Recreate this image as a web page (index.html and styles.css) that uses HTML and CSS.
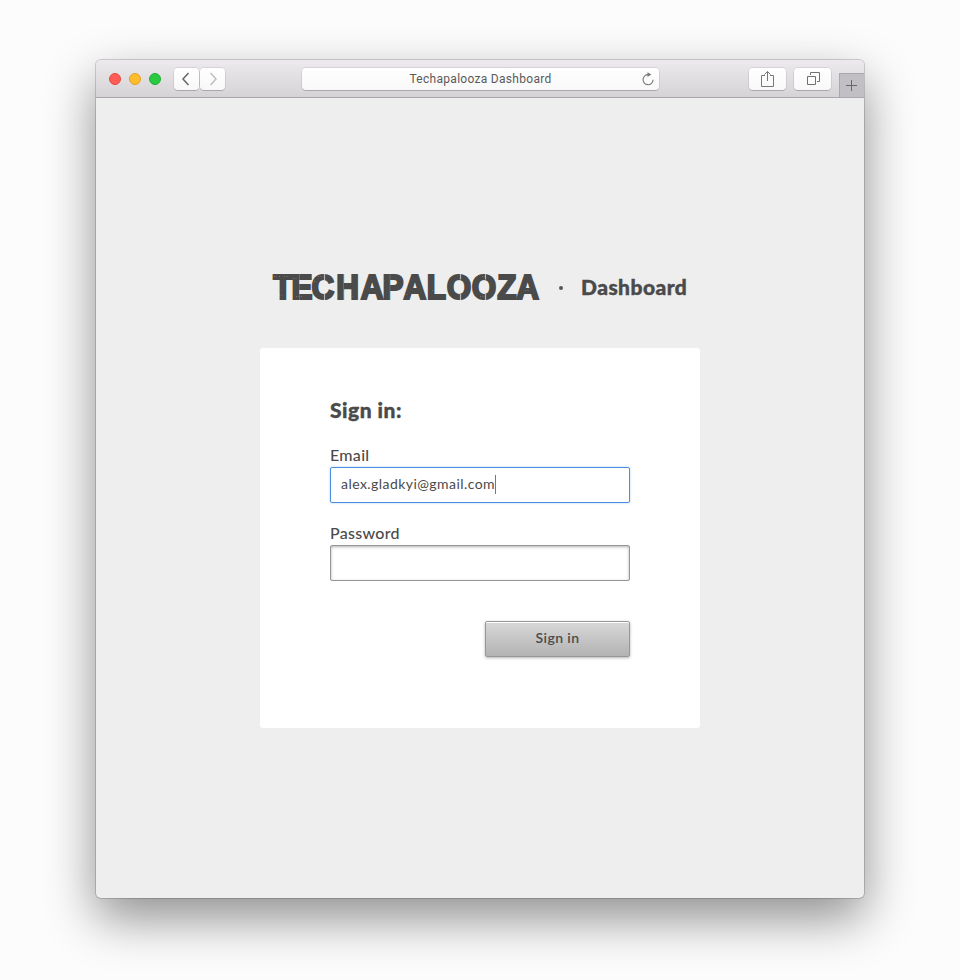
FILE: index.html
```html
<!DOCTYPE html>
<html lang="en">
<head>
<meta charset="utf-8">
<title>Techapalooza Dashboard</title>
<link rel="stylesheet" href="styles.css">
</head>
<body>
<div class="window">
  <header class="toolbar">
    <div class="lights"><i class="light red"></i><i class="light yellow"></i><i class="light green"></i></div>
    <div class="nav">
      <span class="control"><svg width="25" height="22" viewBox="0 0 25 22"><path d="M14.500 5 9 11l5.500 6" fill="none" stroke="#666" stroke-width="1.500"/></svg></span>
      <span class="control"><svg width="25" height="22" viewBox="0 0 25 22"><path d="M10.500 5 16 11l-5.500 6" fill="none" stroke="#bcbcbc" stroke-width="1.400"/></svg></span>
    </div>
    <div class="control address"><span class="address-text">Techapalooza Dashboard</span>
      <svg class="reload" width="14" height="16" viewBox="0 0 14 16"><path d="M7.500 3.700A5 5 0 1 0 12 8.700" fill="none" stroke="#777" stroke-width="1.100"/><path d="M6.500 1.200 10.300 3.500 6.500 6z" fill="#777"/></svg>
    </div>
    <div class="tools">
      <span class="control"><svg width="38" height="22" viewBox="0 0 38 22"><path d="M16 7.500h-3.500v11h12v-11H21M18.500 13V3.500M15.500 6.500l3-3 3 3" fill="none" stroke="#777"/></svg></span>
      <span class="control"><svg width="38" height="22" viewBox="0 0 38 22"><path d="M13.500 8.500h8v8h-8zM16.500 7v-2.500h9v9H23" fill="none" stroke="#707070"/></svg></span>
    </div>
    <div class="new-tab"><svg width="24" height="23" viewBox="0 0 24 23"><path d="M11.500 6v11M6 11.500h11" stroke="#68666a" fill="none"/></svg></div>
  </header>
  <main>
    <div class="brand">
      <svg class="logo" width="269" height="32" viewBox="0 0 269 32">
        <text class="logo-text" transform="scale(.9 1)" y="27" x="1.300 21.800 43.900 71.300 98.500 122.800 146.200 172 194.200 222 250.200 271.500">TECHAPALOOZA</text>
        <g fill="none" stroke="#eee">
          <path d="M52.500 1v7M52.500 22v7M188.500 1v6.500M188.500 22v7M213.500 1v6.500M213.500 22v7" stroke-width="1.200" opacity=".65"/>
          <path d="M27.500 2v26M71.500 2v26M118 2v26" opacity=".2"/>
          <path d="M2 4.500h3m2 0h2m3 0h5m4 2h4m17 3h3m27-3h4m14 9h3m17-7h3m19 14h4m24-4h4m19 0h3m24-14h4m24 11h3m12 3h4M7 23.500h3m14 1h7m15-20h4m28 20h3m54-19h3m70 19h4" stroke-dasharray="1 1.500" opacity=".25"/>
        </g>
      </svg>
      <i class="dot"></i>
      <span class="brand-name">Dashboard</span>
    </div>
    <form class="card">
      <h1>Sign in:</h1>
      <label>Email</label>
      <div class="field focused"><span class="value">alex.gladkyi@gmail.com</span><i class="caret"></i></div>
      <label>Password</label>
      <div class="field"></div>
      <button type="button">Sign in</button>
    </form>
  </main>
</div>
</body>
</html>
```
FILE: styles.css
```css
* { box-sizing: border-box; }
body { margin: 0; height: 980px; padding: 60px 96px 0; background: #fcfcfc; overflow: hidden; font-family: Lato, sans-serif; color: #4a4a4a; }
svg { display: block; }
.window { width: 768px; height: 838px; border-radius: 5px; background: #eee; box-shadow: 0 0 0 1px rgba(0,0,0,.16), 0 20px 50px rgba(0,0,0,.44); }
.toolbar { height: 38px; display: flex; align-items: flex-start; padding: 8px 0 0 13px; border-bottom: 1px solid #aaa6ab; border-radius: 5px 5px 0 0; background: linear-gradient(#eceaed, #d6d3d7); }
.lights { display: flex; gap: 8px; margin-top: 5px; }
.light { width: 12px; height: 12px; border-radius: 50%; border: 1px solid; }
.red { background: #ff5c55; border-color: #e8483f; }
.yellow { background: #ffbd2d; border-color: #e1a226; }
.green { background: #28ca41; border-color: #20ad34; }
.nav { display: flex; gap: 1px; margin-left: 13px; }
.control { display: block; height: 22px; border-radius: 4px; background: linear-gradient(#fff, #f8f8f8); box-shadow: 0 0 0 .5px rgba(0,0,0,.16), 0 1px 0 #b9b6ba; }
.nav .control { width: 25px; }
.address { width: 357px; margin-left: 77px; display: flex; align-items: center; justify-content: flex-end; padding-right: 4px; }
.address-text { flex: 1; text-align: center; padding-left: 18px; font: 12px/22px Roboto, sans-serif; letter-spacing: .29px; color: #5a5a5a; }
.tools { display: flex; gap: 8px; margin-left: 90px; }
.tools .control { width: 37px; }
.new-tab { width: 25px; height: 24px; margin: 5px 0 0 auto; background: #c2bfc4; border-left: 1px solid #aaa7ac; border-top: 1px solid #aaa7ac; }
main { display: flex; flex-direction: column; align-items: center; }
.brand { width: 416px; height: 32px; margin-top: 174px; display: flex; align-items: center; }
.logo { overflow: visible; }
.logo-text { font: bold 35px "Liberation Sans", sans-serif; fill: #4a4a4a; stroke: #4a4a4a; stroke-width: 2.2px; }
.dot { width: 4px; height: 4px; border-radius: 50%; background: #555; margin-left: 18px; }
.brand-name { font-size: 21px; font-weight: 900; line-height: 30px; margin-left: 18px; padding-bottom: 3px; letter-spacing: .45px; -webkit-text-stroke: .4px #4a4a4a; }
.card { width: 440px; height: 380px; margin-top: 44px; padding: 49px 70px; background: #fff; border-radius: 3px; display: flex; flex-direction: column; }
h1 { margin: 0 0 21px; font-size: 21px; line-height: 26px; font-weight: 900; letter-spacing: .5px; -webkit-text-stroke: .4px #4a4a4a; }
label { height: 23px; font-size: 16px; line-height: 22px; font-weight: 500; letter-spacing: .3px; }
.field { height: 36px; margin-bottom: 19px; border: 1px solid #979797; border-radius: 2px; box-shadow: inset 0 1px 3px rgba(0,0,0,.3); display: flex; align-items: center; padding: 0 10px; font-size: 14px; letter-spacing: .44px; }
.value { padding-bottom: 3px; }
.focused { border-color: #4a90e2; box-shadow: 0 0 2px rgba(74,144,226,.5); }
.caret { width: 1px; height: 19px; background: #777; margin-bottom: 1px; }
button { width: 145px; height: 36px; margin: 21px 0 0 auto; padding: 0 0 3px; border: 1px solid #979797; border-radius: 2px; background: linear-gradient(#d8d8d8, #b3b3b3); box-shadow: inset 0 1px 0 #fff, 0 1px 3px rgba(0,0,0,.3); font: 600 14px Lato, sans-serif; letter-spacing: .4px; color: #4a4a4a; }
```
